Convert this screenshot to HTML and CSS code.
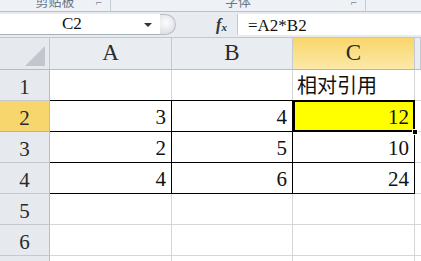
FILE: index.html
```html
<!DOCTYPE html>
<html>
<head>
  <title>Sheet1 - 相对引用</title>
  <link rel="stylesheet" href="styles.css">
</head>
<body>
  <div class="ribbon">
    <div class="group g1"><span class="glabel">剪贴板</span><span class="launch">⌐</span></div>
    <div class="group g2"><span class="glabel">字体</span><span class="launch">⌐</span></div>
  </div>

  <div class="fbar">
    <div class="namebox">
      <span class="ref">C2</span>
      <span class="drop"></span>
    </div>
    <div class="grip"></div>
    <div class="fx"><i>f</i><i class="x">x</i></div>
    <div class="formula">=A2*B2</div>
  </div>

  <div class="sheet">
    <div class="corner"><span class="tri"></span></div>
    <div class="colh">A</div>
    <div class="colh">B</div>
    <div class="colh sel">C</div>
    <div class="colh edge"></div>

    <div class="rowh">1</div>
    <div class="cell"></div>
    <div class="cell"></div>
    <div class="cell txt">相对引用</div>
    <div class="cell edge"></div>

    <div class="rowh sel">2</div>
    <div class="cell d top">3</div>
    <div class="cell d top">4</div>
    <div class="cell d top active">12<span class="handle"></span></div>
    <div class="cell edge"></div>

    <div class="rowh">3</div>
    <div class="cell d">2</div>
    <div class="cell d">5</div>
    <div class="cell d">10</div>
    <div class="cell edge"></div>

    <div class="rowh">4</div>
    <div class="cell d bot">4</div>
    <div class="cell d bot">6</div>
    <div class="cell d bot">24</div>
    <div class="cell edge"></div>

    <div class="rowh">5</div>
    <div class="cell"></div>
    <div class="cell"></div>
    <div class="cell"></div>
    <div class="cell edge"></div>

    <div class="rowh">6</div>
    <div class="cell"></div>
    <div class="cell"></div>
    <div class="cell"></div>
    <div class="cell edge"></div>

    <div class="rowh">7</div>
    <div class="cell"></div>
    <div class="cell"></div>
    <div class="cell"></div>
    <div class="cell edge"></div>
  </div>
</body>
</html>
```

FILE: styles.css
```css
* { box-sizing: border-box; }
body { margin: 0; width: 421px; height: 261px; overflow: hidden; background: #fff; font-family: "Liberation Serif", "DejaVu Serif", serif; }

/* ribbon remains at the top */
.ribbon { display: flex; height: 12px; background: #eef1f5; border-bottom: 1px solid #b9c0c9; overflow: hidden; }
.group { position: relative; display: flex; justify-content: center; border-right: 1px solid #c6ccd4; height: 11px; }
.g1 { width: 111px; }
.g2 { width: 255px; }
.glabel { font-family: "Noto Sans CJK SC", sans-serif; font-size: 13px; color: #6c7686; line-height: 13px; margin-top: -6px; }
.launch { position: absolute; right: 8px; top: -4px; font-size: 11px; color: #7c8594; }

/* formula bar */
.fbar { display: flex; align-items: stretch; height: 26px; background: #e8ebef; padding: 2px 0 2px 0; border-bottom: 1px solid #c3c8cf; }
.namebox { display: flex; align-items: center; width: 160px; background: #fff; border-bottom: 1px solid #a9b1bb; padding-left: 62px; }
.ref { font-family: "Liberation Serif", "DejaVu Serif", serif; font-size: 17px; color: #111; width: 82px; }
.drop { width: 0; height: 0; border-left: 4px solid transparent; border-right: 4px solid transparent; border-top: 4px solid #333; margin-top: 2px; }
.grip { width: 16px; border-radius: 0 11px 11px 0; background: radial-gradient(circle at 40% 40%, #fdfdfd, #d3d8de); border: 1px solid #b7bec8; border-left: none; }
.fx { display: flex; align-items: center; justify-content: center; width: 61px; padding-left: 30px; font-size: 16px; font-weight: bold; color: #2a3340; }
.fx .x { font-size: 11px; margin-top: 4px; }
.formula { flex: 1; background: #fff; border-left: 1px solid #c3c8cf; font-family: "Liberation Serif", "DejaVu Serif", serif; font-size: 17px; color: #111; padding: 2px 0 0 10px; }

/* grid */
.sheet { display: grid; grid-template-columns: 50px 122px 121px 122px 6px; grid-template-rows: 32px repeat(7, 31px); }
.corner { position: relative; background: #e6e9ee; border-right: 1px solid #c4c9d0; border-bottom: 1px solid #b6bcc5; }
.tri { position: absolute; right: 4px; bottom: 3px; width: 0; height: 0; border-left: 20px solid transparent; border-bottom: 20px solid #c2c6cc; }
.colh { display: flex; justify-content: center; align-items: flex-end; padding-bottom: 2px; background: #e9ecf0; border-right: 1px solid #c4c9d0; border-bottom: 1px solid #b6bcc5; font-size: 23px; color: #2a2a2a; line-height: 28px; }
.colh.sel { background: linear-gradient(#f8d66a, #fce9a8); border-bottom-color: #d9b350; }
.rowh { display: flex; justify-content: center; align-items: flex-end; background: #e6e9ee; border-right: 1px solid #b6bcc5; border-bottom: 1px solid #c4c9d0; font-size: 21px; color: #2a2a2a; line-height: 26px; }
.rowh.sel { background: #f7d66d; border-bottom-color: #d9b350; }
.cell { display: flex; justify-content: flex-end; align-items: flex-end; padding: 0 5px 1px 0; border-right: 1px solid #d6d6d6; border-bottom: 1px solid #d6d6d6; font-size: 21px; line-height: 26px; color: #111; }
.cell.edge { border-right: none; }
.cell.txt { justify-content: flex-start; padding-left: 4px; font-family: "Noto Sans CJK SC", sans-serif; font-size: 20px; line-height: 28px; }
.cell.d { border-right-color: #000; border-bottom-color: #000; }
.sheet .cell.top { border-top: 1px solid #000; margin-top: -1px; }
.active { position: relative; background: #ffff00; outline: 2px solid #000; outline-offset: -2px; }
.handle { position: absolute; right: -4px; bottom: -4px; width: 6px; height: 6px; background: #000; border: 1px solid #fff; }
```
